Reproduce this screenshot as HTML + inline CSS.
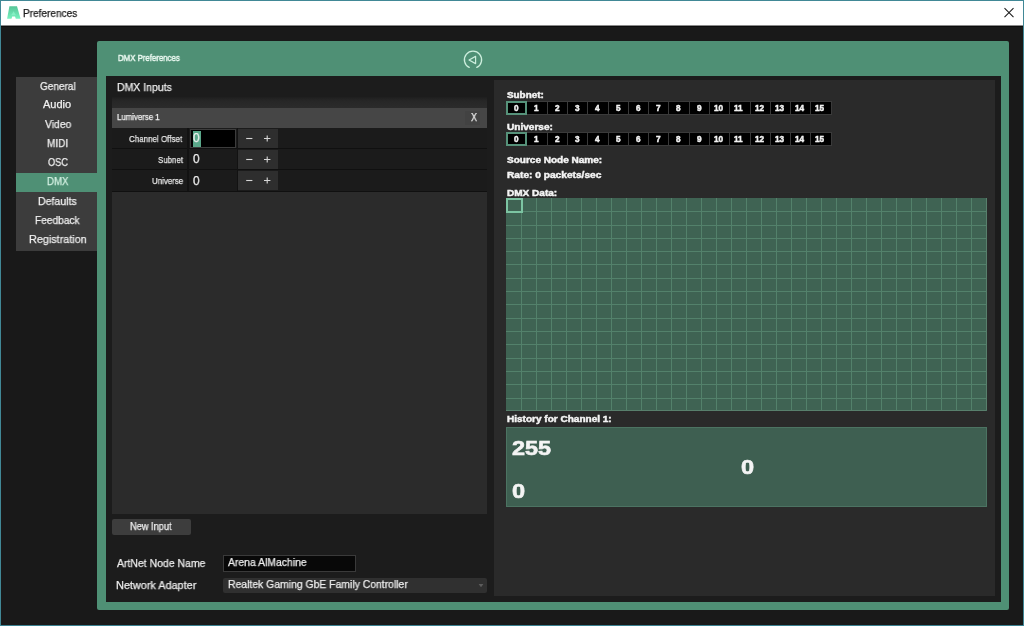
<!DOCTYPE html>
<html><head><meta charset="utf-8"><style>
html,body{margin:0;padding:0;width:1024px;height:626px;overflow:hidden;background:#191919}
body{position:relative;font-family:"Liberation Sans",sans-serif}
div{position:absolute;box-sizing:border-box}
.t{white-space:nowrap;will-change:transform;-webkit-text-stroke-width:0.25px}
svg{display:block}
</style></head><body>
<div style="left:0px;top:0px;width:1024px;height:626px;background:#191919"></div>
<div style="left:0px;top:0px;width:1024px;height:1px;background:#418896"></div>
<div style="left:0px;top:625px;width:1024px;height:1px;background:#3a8090"></div>
<div style="left:0px;top:0px;width:1px;height:626px;background:#418896"></div>
<div style="left:1023px;top:0px;width:1px;height:626px;background:#418896"></div>
<div style="left:1px;top:1px;width:1022px;height:24px;background:#ffffff"></div>
<div style="left:1px;top:25px;width:1022px;height:1px;background:#8a8a8a"></div>
<div style="left:1px;top:26px;width:1022px;height:1px;background:#0c0c0c"></div>
<svg style="position:absolute;left:0;top:0" width="26" height="26" viewBox="0 0 26 26"><defs><linearGradient id="ig" x1="0" y1="0" x2="0" y2="1"><stop offset="0" stop-color="#56c497"/><stop offset="1" stop-color="#78f2bf"/></linearGradient></defs><path d="M9.4 6.2 H17 L20.6 18.7 H15.8 L15 16.6 H12.2 L11.5 18.7 H7.1 Z" fill="url(#ig)"/><path d="M11.2 15.2 L13.6 11.2 L16 15.2 Z" fill="#8ef5cc" opacity="0.7"/></svg>
<div class="t" style="left:22.98px;top:7.92px;font-size:10.5px;line-height:10.5px;color:#1a1a1a;font-weight:400;letter-spacing:0px;transform:scaleX(0.9586);transform-origin:0 0;">Preferences</div>
<svg style="position:absolute;left:1003px;top:7px" width="12" height="12" viewBox="0 0 12 12"><path d="M1.5 1.2 L10.5 10.2 M10.5 1.2 L1.5 10.2" stroke="#1e1e1e" stroke-width="1.05"/></svg>
<div style="left:16px;top:76.5px;width:81px;height:174px;background:#3c3c3c"></div>
<div class="t" style="left:39.94px;top:80.70px;font-size:11px;line-height:11px;color:#f0f0f0;font-weight:400;letter-spacing:0px;transform:scaleX(0.9105);transform-origin:0 0;">General</div>
<div class="t" style="left:42.80px;top:99.00px;font-size:11px;line-height:11px;color:#f0f0f0;font-weight:400;letter-spacing:0px;">Audio</div>
<div class="t" style="left:44.86px;top:118.50px;font-size:11px;line-height:11px;color:#f0f0f0;font-weight:400;letter-spacing:0px;transform:scaleX(0.9431);transform-origin:0 0;">Video</div>
<div class="t" style="left:47.29px;top:137.70px;font-size:11px;line-height:11px;color:#f0f0f0;font-weight:400;letter-spacing:0px;transform:scaleX(0.9082);transform-origin:0 0;">MIDI</div>
<div class="t" style="left:48.28px;top:157.10px;font-size:11px;line-height:11px;color:#f0f0f0;font-weight:400;letter-spacing:0px;transform:scaleX(0.8352);transform-origin:0 0;">OSC</div>
<div style="left:16px;top:172.9px;width:82px;height:19px;background:#4f9075"></div>
<div class="t" style="left:47.02px;top:176.40px;font-size:11px;line-height:11px;color:#d6f2e4;font-weight:400;letter-spacing:0px;transform:scaleX(0.8817);transform-origin:0 0;">DMX</div>
<div class="t" style="left:38.24px;top:195.50px;font-size:11px;line-height:11px;color:#f0f0f0;font-weight:400;letter-spacing:0px;transform:scaleX(0.9615);transform-origin:0 0;">Defaults</div>
<div class="t" style="left:35.38px;top:214.70px;font-size:11px;line-height:11px;color:#f0f0f0;font-weight:400;letter-spacing:0px;transform:scaleX(0.9228);transform-origin:0 0;">Feedback</div>
<div class="t" style="left:28.92px;top:234.10px;font-size:11px;line-height:11px;color:#f0f0f0;font-weight:400;letter-spacing:0px;transform:scaleX(0.9842);transform-origin:0 0;">Registration</div>
<div style="left:97px;top:41px;width:912px;height:569px;background:#4f9075;border-radius:2px"></div>
<div class="t" style="left:118.20px;top:53.10px;font-size:9.8px;line-height:9.8px;color:#e8f7ef;font-weight:400;letter-spacing:0px;transform:scaleX(0.7987);transform-origin:0 0;-webkit-text-stroke-width:0.5px;">DMX Preferences</div>
<svg style="position:absolute;left:462px;top:49px" width="22" height="22" viewBox="0 0 22 22"><path d="M7.2 18.4 A8.6 8.6 0 1 1 14.8 18.4" fill="none" stroke="#cdeedd" stroke-width="1.3" stroke-linecap="round"/><path d="M7 11 L13.6 7.4 L13.6 14.6 Z" fill="none" stroke="#cdeedd" stroke-width="1.2" stroke-linejoin="round"/></svg>
<div style="left:106px;top:76px;width:895px;height:526px;background:#1c1c1c"></div>
<div class="t" style="left:117.05px;top:81.90px;font-size:11px;line-height:11px;color:#eeeeee;font-weight:400;letter-spacing:0px;transform:scaleX(0.9536);transform-origin:0 0;">DMX Inputs</div>
<div style="left:112px;top:97px;width:375px;height:417px;background:linear-gradient(#1e1e1e 0px,#272727 4px,#2b2b2b 11px)"></div>
<div style="left:112px;top:108px;width:375px;height:20px;background:#464646"></div>
<div class="t" style="left:117.33px;top:112.84px;font-size:8.8px;line-height:8.8px;color:#f0f0f0;font-weight:400;letter-spacing:0px;transform:scaleX(0.8898);transform-origin:0 0;">Lumiverse 1</div>
<div style="left:465px;top:111px;width:15px;height:14px;background:#424242"></div>
<div class="t" style="left:471.18px;top:112.12px;font-size:10.5px;line-height:10.5px;color:#f0f0f0;font-weight:400;letter-spacing:0px;transform:scaleX(0.8615);transform-origin:0 0;">X</div>
<div style="left:112px;top:128px;width:375px;height:20.2px;background:#1b1b1b"></div>
<div style="left:112px;top:148.2px;width:375px;height:1px;background:#101010"></div>
<div style="left:187px;top:128px;width:1.5px;height:20.5px;background:#121212"></div>
<div style="left:237px;top:128px;width:1px;height:20.5px;background:#121212"></div>
<div class="t" style="left:129.28px;top:133.77px;font-size:9.6px;line-height:9.6px;color:#e6e6e6;font-weight:400;letter-spacing:0px;transform:scaleX(0.8332);transform-origin:0 0;">Channel Offset</div>
<div style="left:238px;top:129px;width:40px;height:19px;background:#2e2e2e"></div>
<svg style="position:absolute;left:244px;top:134px" width="30" height="9" viewBox="0 0 30 9"><g stroke="#d6d6d6" stroke-width="1.1"><path d="M2.2 4.5 H8.4"/><path d="M20 4.5 H26.4 M23.2 1.4 V7.6"/></g></svg>
<div style="left:189.5px;top:129px;width:46.5px;height:19px;background:#000;box-shadow:inset 0 0 0 1px #3c3c3c"></div>
<div style="left:192.6px;top:131.1px;width:8.7px;height:15.7px;background:#5aa88a"></div>
<div class="t" style="left:193.01px;top:132.26px;font-size:12px;line-height:12px;color:#f0f0f0;font-weight:400;letter-spacing:0px;transform:scaleX(0.9739);transform-origin:0 0;">0</div>
<div style="left:112px;top:149.17px;width:375px;height:20.2px;background:#1b1b1b"></div>
<div style="left:112px;top:169.36999999999998px;width:375px;height:1px;background:#101010"></div>
<div style="left:187px;top:149.17px;width:1.5px;height:20.5px;background:#121212"></div>
<div style="left:237px;top:149.17px;width:1px;height:20.5px;background:#121212"></div>
<div class="t" style="left:157.59px;top:154.94px;font-size:9.6px;line-height:9.6px;color:#e6e6e6;font-weight:400;letter-spacing:0px;transform:scaleX(0.8202);transform-origin:0 0;">Subnet</div>
<div style="left:238px;top:150.17px;width:40px;height:19px;background:#2e2e2e"></div>
<svg style="position:absolute;left:244px;top:155.17px" width="30" height="9" viewBox="0 0 30 9"><g stroke="#d6d6d6" stroke-width="1.1"><path d="M2.2 4.5 H8.4"/><path d="M20 4.5 H26.4 M23.2 1.4 V7.6"/></g></svg>
<div class="t" style="left:193.01px;top:153.43px;font-size:12px;line-height:12px;color:#f0f0f0;font-weight:400;letter-spacing:0px;transform:scaleX(0.9739);transform-origin:0 0;">0</div>
<div style="left:112px;top:170.33px;width:375px;height:20.2px;background:#1b1b1b"></div>
<div style="left:112px;top:190.53px;width:375px;height:1px;background:#101010"></div>
<div style="left:187px;top:170.33px;width:1.5px;height:20.5px;background:#121212"></div>
<div style="left:237px;top:170.33px;width:1px;height:20.5px;background:#121212"></div>
<div class="t" style="left:151.58px;top:176.10px;font-size:9.6px;line-height:9.6px;color:#e6e6e6;font-weight:400;letter-spacing:0px;transform:scaleX(0.8218);transform-origin:0 0;">Universe</div>
<div style="left:238px;top:171.33px;width:40px;height:19px;background:#2e2e2e"></div>
<svg style="position:absolute;left:244px;top:176.33px" width="30" height="9" viewBox="0 0 30 9"><g stroke="#d6d6d6" stroke-width="1.1"><path d="M2.2 4.5 H8.4"/><path d="M20 4.5 H26.4 M23.2 1.4 V7.6"/></g></svg>
<div class="t" style="left:193.01px;top:174.59px;font-size:12px;line-height:12px;color:#f0f0f0;font-weight:400;letter-spacing:0px;transform:scaleX(0.9739);transform-origin:0 0;">0</div>
<div style="left:112px;top:519px;width:79px;height:16px;background:#3d3d3d;border-radius:2px"></div>
<div class="t" style="left:130.41px;top:521.84px;font-size:10px;line-height:10px;color:#eeeeee;font-weight:400;letter-spacing:0px;transform:scaleX(0.9243);transform-origin:0 0;">New Input</div>
<div class="t" style="left:116.60px;top:557.50px;font-size:11px;line-height:11px;color:#eeeeee;font-weight:400;letter-spacing:0px;transform:scaleX(0.9514);transform-origin:0 0;">ArtNet Node Name</div>
<div class="t" style="left:115.61px;top:579.50px;font-size:11px;line-height:11px;color:#eeeeee;font-weight:400;letter-spacing:0px;transform:scaleX(0.9882);transform-origin:0 0;">Network Adapter</div>
<div style="left:223px;top:555px;width:133px;height:17px;background:#080808;box-shadow:inset 0 0 0 1px #3a3a3a"></div>
<div class="t" style="left:228.30px;top:557.30px;font-size:11px;line-height:11px;color:#eeeeee;font-weight:400;letter-spacing:0px;transform:scaleX(0.9462);transform-origin:0 0;">Arena AlMachine</div>
<div style="left:223px;top:577.5px;width:264px;height:15.5px;background:#303030;border-radius:2px"></div>
<div class="t" style="left:228.35px;top:579.30px;font-size:11px;line-height:11px;color:#eeeeee;font-weight:400;letter-spacing:0px;transform:scaleX(0.9455);transform-origin:0 0;">Realtek Gaming GbE Family Controller</div>
<svg style="position:absolute;left:478px;top:583px" width="6" height="5" viewBox="0 0 6 5"><path d="M0.6 1 H5.4 L3 4.2 Z" fill="#5c5c5c"/></svg>
<div style="left:494px;top:80px;width:501px;height:516px;background:#2a2a2a"></div>
<div class="t" style="left:507.12px;top:90.74px;font-size:8.8px;line-height:8.8px;color:#f4f4f4;font-weight:700;letter-spacing:0px;transform:scaleX(1.1213);transform-origin:0 0;-webkit-text-stroke:0.45px #f4f4f4;">Subnet:</div>
<div class="t" style="left:507.03px;top:122.64px;font-size:8.8px;line-height:8.8px;color:#f4f4f4;font-weight:700;letter-spacing:0px;transform:scaleX(1.1432);transform-origin:0 0;-webkit-text-stroke:0.45px #f4f4f4;">Universe:</div>
<div style="left:506px;top:101px;width:326px;height:14px;background:#000;border:1px solid #3a3a3a"></div>
<div style="left:526px;top:101px;width:1px;height:14px;background:#3a3a3a"></div>
<div style="left:547px;top:101px;width:1px;height:14px;background:#3a3a3a"></div>
<div style="left:567px;top:101px;width:1px;height:14px;background:#3a3a3a"></div>
<div style="left:587px;top:101px;width:1px;height:14px;background:#3a3a3a"></div>
<div style="left:608px;top:101px;width:1px;height:14px;background:#3a3a3a"></div>
<div style="left:628px;top:101px;width:1px;height:14px;background:#3a3a3a"></div>
<div style="left:648px;top:101px;width:1px;height:14px;background:#3a3a3a"></div>
<div style="left:668px;top:101px;width:1px;height:14px;background:#3a3a3a"></div>
<div style="left:689px;top:101px;width:1px;height:14px;background:#3a3a3a"></div>
<div style="left:709px;top:101px;width:1px;height:14px;background:#3a3a3a"></div>
<div style="left:729px;top:101px;width:1px;height:14px;background:#3a3a3a"></div>
<div style="left:750px;top:101px;width:1px;height:14px;background:#3a3a3a"></div>
<div style="left:770px;top:101px;width:1px;height:14px;background:#3a3a3a"></div>
<div style="left:790px;top:101px;width:1px;height:14px;background:#3a3a3a"></div>
<div style="left:810px;top:101px;width:1px;height:14px;background:#3a3a3a"></div>
<div style="left:506px;top:101px;width:21px;height:14px;border:2px solid #56927a"></div>
<div class="t" style="left:513.90px;top:104.74px;font-size:8.2px;line-height:8.2px;color:#f0f0f0;font-weight:700;letter-spacing:0px;-webkit-text-stroke:0.45px #f4f4f4;">0</div>
<div class="t" style="left:534.15px;top:104.74px;font-size:8.2px;line-height:8.2px;color:#f0f0f0;font-weight:700;letter-spacing:0px;-webkit-text-stroke:0.45px #f4f4f4;">1</div>
<div class="t" style="left:554.90px;top:104.74px;font-size:8.2px;line-height:8.2px;color:#f0f0f0;font-weight:700;letter-spacing:0px;-webkit-text-stroke:0.45px #f4f4f4;">2</div>
<div class="t" style="left:574.90px;top:104.74px;font-size:8.2px;line-height:8.2px;color:#f0f0f0;font-weight:700;letter-spacing:0px;-webkit-text-stroke:0.45px #f4f4f4;">3</div>
<div class="t" style="left:595.40px;top:104.74px;font-size:8.2px;line-height:8.2px;color:#f0f0f0;font-weight:700;letter-spacing:0px;-webkit-text-stroke:0.45px #f4f4f4;">4</div>
<div class="t" style="left:615.90px;top:104.74px;font-size:8.2px;line-height:8.2px;color:#f0f0f0;font-weight:700;letter-spacing:0px;-webkit-text-stroke:0.45px #f4f4f4;">5</div>
<div class="t" style="left:635.90px;top:104.74px;font-size:8.2px;line-height:8.2px;color:#f0f0f0;font-weight:700;letter-spacing:0px;-webkit-text-stroke:0.45px #f4f4f4;">6</div>
<div class="t" style="left:655.90px;top:104.74px;font-size:8.2px;line-height:8.2px;color:#f0f0f0;font-weight:700;letter-spacing:0px;-webkit-text-stroke:0.45px #f4f4f4;">7</div>
<div class="t" style="left:676.40px;top:104.74px;font-size:8.2px;line-height:8.2px;color:#f0f0f0;font-weight:700;letter-spacing:0px;-webkit-text-stroke:0.45px #f4f4f4;">8</div>
<div class="t" style="left:696.90px;top:104.74px;font-size:8.2px;line-height:8.2px;color:#f0f0f0;font-weight:700;letter-spacing:0px;-webkit-text-stroke:0.45px #f4f4f4;">9</div>
<div class="t" style="left:713.65px;top:104.74px;font-size:8.2px;line-height:8.2px;color:#f0f0f0;font-weight:700;letter-spacing:0px;-webkit-text-stroke:0.45px #f4f4f4;">10</div>
<div class="t" style="left:734.15px;top:104.74px;font-size:8.2px;line-height:8.2px;color:#f0f0f0;font-weight:700;letter-spacing:0px;-webkit-text-stroke:0.45px #f4f4f4;">11</div>
<div class="t" style="left:754.65px;top:104.74px;font-size:8.2px;line-height:8.2px;color:#f0f0f0;font-weight:700;letter-spacing:0px;-webkit-text-stroke:0.45px #f4f4f4;">12</div>
<div class="t" style="left:774.65px;top:104.74px;font-size:8.2px;line-height:8.2px;color:#f0f0f0;font-weight:700;letter-spacing:0px;-webkit-text-stroke:0.45px #f4f4f4;">13</div>
<div class="t" style="left:794.65px;top:104.74px;font-size:8.2px;line-height:8.2px;color:#f0f0f0;font-weight:700;letter-spacing:0px;-webkit-text-stroke:0.45px #f4f4f4;">14</div>
<div class="t" style="left:815.15px;top:104.74px;font-size:8.2px;line-height:8.2px;color:#f0f0f0;font-weight:700;letter-spacing:0px;-webkit-text-stroke:0.45px #f4f4f4;">15</div>
<div style="left:506px;top:132px;width:326px;height:14px;background:#000;border:1px solid #3a3a3a"></div>
<div style="left:526px;top:132px;width:1px;height:14px;background:#3a3a3a"></div>
<div style="left:547px;top:132px;width:1px;height:14px;background:#3a3a3a"></div>
<div style="left:567px;top:132px;width:1px;height:14px;background:#3a3a3a"></div>
<div style="left:587px;top:132px;width:1px;height:14px;background:#3a3a3a"></div>
<div style="left:608px;top:132px;width:1px;height:14px;background:#3a3a3a"></div>
<div style="left:628px;top:132px;width:1px;height:14px;background:#3a3a3a"></div>
<div style="left:648px;top:132px;width:1px;height:14px;background:#3a3a3a"></div>
<div style="left:668px;top:132px;width:1px;height:14px;background:#3a3a3a"></div>
<div style="left:689px;top:132px;width:1px;height:14px;background:#3a3a3a"></div>
<div style="left:709px;top:132px;width:1px;height:14px;background:#3a3a3a"></div>
<div style="left:729px;top:132px;width:1px;height:14px;background:#3a3a3a"></div>
<div style="left:750px;top:132px;width:1px;height:14px;background:#3a3a3a"></div>
<div style="left:770px;top:132px;width:1px;height:14px;background:#3a3a3a"></div>
<div style="left:790px;top:132px;width:1px;height:14px;background:#3a3a3a"></div>
<div style="left:810px;top:132px;width:1px;height:14px;background:#3a3a3a"></div>
<div style="left:506px;top:132px;width:21px;height:14px;border:2px solid #56927a"></div>
<div class="t" style="left:513.90px;top:135.74px;font-size:8.2px;line-height:8.2px;color:#f0f0f0;font-weight:700;letter-spacing:0px;-webkit-text-stroke:0.45px #f4f4f4;">0</div>
<div class="t" style="left:534.15px;top:135.74px;font-size:8.2px;line-height:8.2px;color:#f0f0f0;font-weight:700;letter-spacing:0px;-webkit-text-stroke:0.45px #f4f4f4;">1</div>
<div class="t" style="left:554.90px;top:135.74px;font-size:8.2px;line-height:8.2px;color:#f0f0f0;font-weight:700;letter-spacing:0px;-webkit-text-stroke:0.45px #f4f4f4;">2</div>
<div class="t" style="left:574.90px;top:135.74px;font-size:8.2px;line-height:8.2px;color:#f0f0f0;font-weight:700;letter-spacing:0px;-webkit-text-stroke:0.45px #f4f4f4;">3</div>
<div class="t" style="left:595.40px;top:135.74px;font-size:8.2px;line-height:8.2px;color:#f0f0f0;font-weight:700;letter-spacing:0px;-webkit-text-stroke:0.45px #f4f4f4;">4</div>
<div class="t" style="left:615.90px;top:135.74px;font-size:8.2px;line-height:8.2px;color:#f0f0f0;font-weight:700;letter-spacing:0px;-webkit-text-stroke:0.45px #f4f4f4;">5</div>
<div class="t" style="left:635.90px;top:135.74px;font-size:8.2px;line-height:8.2px;color:#f0f0f0;font-weight:700;letter-spacing:0px;-webkit-text-stroke:0.45px #f4f4f4;">6</div>
<div class="t" style="left:655.90px;top:135.74px;font-size:8.2px;line-height:8.2px;color:#f0f0f0;font-weight:700;letter-spacing:0px;-webkit-text-stroke:0.45px #f4f4f4;">7</div>
<div class="t" style="left:676.40px;top:135.74px;font-size:8.2px;line-height:8.2px;color:#f0f0f0;font-weight:700;letter-spacing:0px;-webkit-text-stroke:0.45px #f4f4f4;">8</div>
<div class="t" style="left:696.90px;top:135.74px;font-size:8.2px;line-height:8.2px;color:#f0f0f0;font-weight:700;letter-spacing:0px;-webkit-text-stroke:0.45px #f4f4f4;">9</div>
<div class="t" style="left:713.65px;top:135.74px;font-size:8.2px;line-height:8.2px;color:#f0f0f0;font-weight:700;letter-spacing:0px;-webkit-text-stroke:0.45px #f4f4f4;">10</div>
<div class="t" style="left:734.15px;top:135.74px;font-size:8.2px;line-height:8.2px;color:#f0f0f0;font-weight:700;letter-spacing:0px;-webkit-text-stroke:0.45px #f4f4f4;">11</div>
<div class="t" style="left:754.65px;top:135.74px;font-size:8.2px;line-height:8.2px;color:#f0f0f0;font-weight:700;letter-spacing:0px;-webkit-text-stroke:0.45px #f4f4f4;">12</div>
<div class="t" style="left:774.65px;top:135.74px;font-size:8.2px;line-height:8.2px;color:#f0f0f0;font-weight:700;letter-spacing:0px;-webkit-text-stroke:0.45px #f4f4f4;">13</div>
<div class="t" style="left:794.65px;top:135.74px;font-size:8.2px;line-height:8.2px;color:#f0f0f0;font-weight:700;letter-spacing:0px;-webkit-text-stroke:0.45px #f4f4f4;">14</div>
<div class="t" style="left:815.15px;top:135.74px;font-size:8.2px;line-height:8.2px;color:#f0f0f0;font-weight:700;letter-spacing:0px;-webkit-text-stroke:0.45px #f4f4f4;">15</div>
<div class="t" style="left:507.42px;top:155.94px;font-size:8.8px;line-height:8.8px;color:#f4f4f4;font-weight:700;letter-spacing:0px;transform:scaleX(1.1382);transform-origin:0 0;-webkit-text-stroke:0.45px #f4f4f4;">Source Node Name:</div>
<div class="t" style="left:507.12px;top:170.94px;font-size:8.8px;line-height:8.8px;color:#f4f4f4;font-weight:700;letter-spacing:0px;transform:scaleX(1.1554);transform-origin:0 0;-webkit-text-stroke:0.45px #f4f4f4;">Rate: 0 packets/sec</div>
<div class="t" style="left:507.12px;top:188.51px;font-size:8.6px;line-height:8.6px;color:#f4f4f4;font-weight:700;letter-spacing:0px;transform:scaleX(1.1665);transform-origin:0 0;-webkit-text-stroke:0.45px #f4f4f4;">DMX Data:</div>
<svg style="position:absolute;left:506px;top:198px" width="481" height="213" viewBox="0 0 481 213"><rect x="0" y="0" width="481" height="213" fill="#3f6353"/><g stroke="#53816b" stroke-width="1"><line x1="15.5" y1="0" x2="15.5" y2="213"/><line x1="30.5" y1="0" x2="30.5" y2="213"/><line x1="45.5" y1="0" x2="45.5" y2="213"/><line x1="60.5" y1="0" x2="60.5" y2="213"/><line x1="75.5" y1="0" x2="75.5" y2="213"/><line x1="90.5" y1="0" x2="90.5" y2="213"/><line x1="105.5" y1="0" x2="105.5" y2="213"/><line x1="120.5" y1="0" x2="120.5" y2="213"/><line x1="135.5" y1="0" x2="135.5" y2="213"/><line x1="150.5" y1="0" x2="150.5" y2="213"/><line x1="165.5" y1="0" x2="165.5" y2="213"/><line x1="180.5" y1="0" x2="180.5" y2="213"/><line x1="195.5" y1="0" x2="195.5" y2="213"/><line x1="210.5" y1="0" x2="210.5" y2="213"/><line x1="225.5" y1="0" x2="225.5" y2="213"/><line x1="240.5" y1="0" x2="240.5" y2="213"/><line x1="255.5" y1="0" x2="255.5" y2="213"/><line x1="270.5" y1="0" x2="270.5" y2="213"/><line x1="285.5" y1="0" x2="285.5" y2="213"/><line x1="300.5" y1="0" x2="300.5" y2="213"/><line x1="315.5" y1="0" x2="315.5" y2="213"/><line x1="330.5" y1="0" x2="330.5" y2="213"/><line x1="345.5" y1="0" x2="345.5" y2="213"/><line x1="360.5" y1="0" x2="360.5" y2="213"/><line x1="375.5" y1="0" x2="375.5" y2="213"/><line x1="390.5" y1="0" x2="390.5" y2="213"/><line x1="405.5" y1="0" x2="405.5" y2="213"/><line x1="420.5" y1="0" x2="420.5" y2="213"/><line x1="435.5" y1="0" x2="435.5" y2="213"/><line x1="450.5" y1="0" x2="450.5" y2="213"/><line x1="465.5" y1="0" x2="465.5" y2="213"/><line x1="0" y1="13.5" x2="481" y2="13.5"/><line x1="0" y1="27.5" x2="481" y2="27.5"/><line x1="0" y1="40.5" x2="481" y2="40.5"/><line x1="0" y1="53.5" x2="481" y2="53.5"/><line x1="0" y1="66.5" x2="481" y2="66.5"/><line x1="0" y1="80.5" x2="481" y2="80.5"/><line x1="0" y1="93.5" x2="481" y2="93.5"/><line x1="0" y1="106.5" x2="481" y2="106.5"/><line x1="0" y1="120.5" x2="481" y2="120.5"/><line x1="0" y1="133.5" x2="481" y2="133.5"/><line x1="0" y1="146.5" x2="481" y2="146.5"/><line x1="0" y1="160.5" x2="481" y2="160.5"/><line x1="0" y1="173.5" x2="481" y2="173.5"/><line x1="0" y1="186.5" x2="481" y2="186.5"/><line x1="0" y1="200.5" x2="481" y2="200.5"/></g><path d="M480.5 0 V212.5 H0" fill="none" stroke="#587f6c"/><rect x="1" y="1" width="15" height="13" fill="none" stroke="#7cc4a2" stroke-width="2"/></svg>
<div class="t" style="left:506.82px;top:414.61px;font-size:8.6px;line-height:8.6px;color:#f4f4f4;font-weight:700;letter-spacing:0px;transform:scaleX(1.1661);transform-origin:0 0;-webkit-text-stroke:0.45px #f4f4f4;">History for Channel 1:</div>
<div style="left:506px;top:427px;width:481px;height:79.5px;background:#3e5f51;box-shadow:inset 0 0 0 1px #4c7362"></div>
<div class="t" style="left:511.72px;top:438.07px;font-size:20px;line-height:20px;color:#f4f4f4;font-weight:700;letter-spacing:0px;transform:scaleX(1.1719);transform-origin:0 0;-webkit-text-stroke:0.6px #f4f4f4;">255</div>
<div class="t" style="left:511.52px;top:481.47px;font-size:20px;line-height:20px;color:#f4f4f4;font-weight:700;letter-spacing:0px;transform:scaleX(1.1789);transform-origin:0 0;-webkit-text-stroke:0.6px #f4f4f4;">0</div>
<div class="t" style="left:740.52px;top:457.07px;font-size:20px;line-height:20px;color:#f4f4f4;font-weight:700;letter-spacing:0px;transform:scaleX(1.1789);transform-origin:0 0;-webkit-text-stroke:0.6px #f4f4f4;">0</div>
</body></html>
